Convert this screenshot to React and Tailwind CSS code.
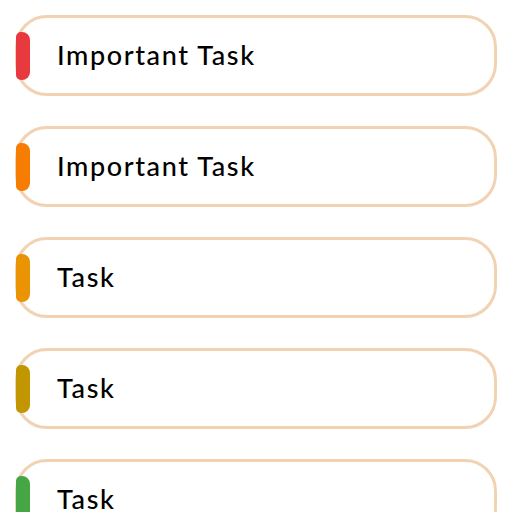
import React from "react";

const tasks = [
  { title: "Important Task", color: "bg-[#e8393f]" },
  { title: "Important Task", color: "bg-[#f67c02]" },
  { title: "Task", color: "bg-[#ea9303]" },
  { title: "Task", color: "bg-[#c29600]" },
  { title: "Task", color: "bg-[#46a646]" },
];

const TaskCard = ({ title, color }) => {
  return (
    <div className="flex h-[81px] items-center rounded-[32px] border-[3px] border-[#f1d2b2] bg-white">
      <div className={`ml-[-2px] h-12 w-[14px] shrink-0 rounded-l-[5px] rounded-r-[8px] ${color}`} />
      <span className="ml-[27px] text-[27px] font-medium tracking-[1.6px] text-black" style={{ fontFamily: '"Lato", sans-serif' }}>
        {title}
      </span>
    </div>
  );
};

export default function App() {
  return (
    <div className="h-[512px] w-[512px] overflow-hidden bg-white">
      <div className="flex flex-col gap-[30px] px-[15px] pt-[15px]">
        {tasks.map((t, i) => (
          <TaskCard key={i} title={t.title} color={t.color} />
        ))}
      </div>
    </div>
  );
}
